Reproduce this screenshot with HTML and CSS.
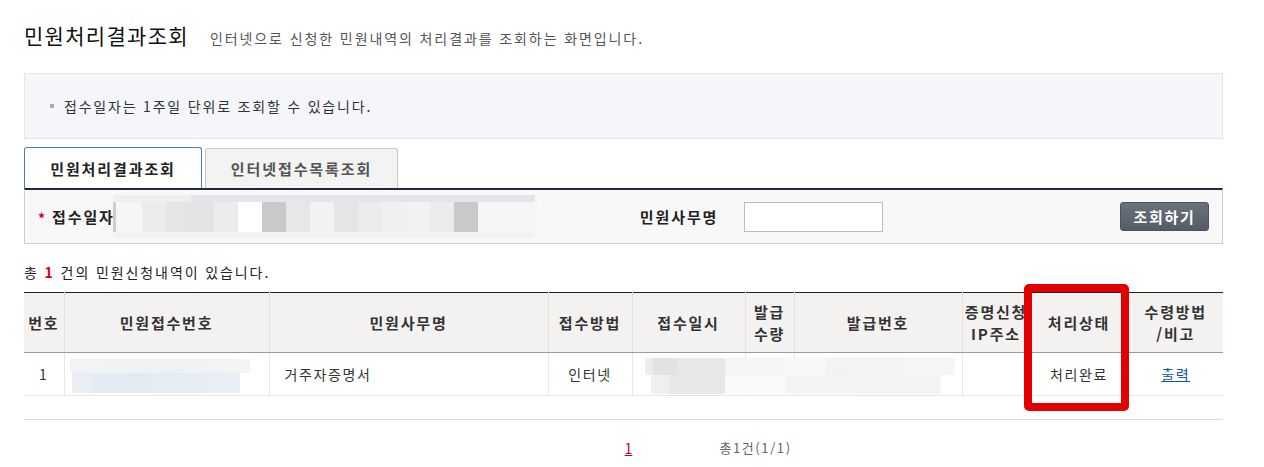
FILE: index.html
```html
<!DOCTYPE html>
<html lang="ko">
<head>
<meta charset="utf-8">
<title>민원처리결과조회</title>
<link rel="stylesheet" href="styles.css">
</head>
<body>
<div class="page">
  <div class="head">
    <h1 class="title">민원처리결과조회</h1>
    <p class="desc">인터넷으로 신청한 민원내역의 처리결과를 조회하는 화면입니다.</p>
  </div>

  <div class="notice"><span class="dot"></span>접수일자는 1주일 단위로 조회할 수 있습니다.</div>

  <div class="tabs">
    <div class="tab active">민원처리결과조회</div>
    <div class="tab">인터넷접수목록조회</div>
  </div>

  <div class="search">
    <span class="req">*</span>
    <span class="lbl">접수일자</span>
    <div class="mask">
      <div class="mask-top"></div>
      <div class="mask-mid"></div>
      <div class="mask-bot"></div>
    </div>
    <span class="lbl lbl2">민원사무명</span>
    <input class="inp" type="text">
    <button class="btn" type="button">조회하기</button>
  </div>

  <p class="count">총 <b>1</b> 건의 민원신청내역이 있습니다.</p>

  <div class="tblwrap">
    <table class="list">
      <colgroup>
        <col class="c1"><col class="c2"><col class="c3"><col class="c4"><col class="c5">
        <col class="c6"><col class="c7"><col class="c8"><col class="c9"><col class="c10">
      </colgroup>
      <thead>
        <tr>
          <th>번호</th>
          <th>민원접수번호</th>
          <th>민원사무명</th>
          <th>접수방법</th>
          <th>접수일시</th>
          <th>발급<br>수량</th>
          <th>발급번호</th>
          <th class="clip">증명신청<br>IP주소</th>
          <th>처리상태</th>
          <th>수령방법<br>/비고</th>
        </tr>
      </thead>
      <tbody>
        <tr>
          <td>1</td>
          <td></td>
          <td class="left">거주자증명서</td>
          <td>인터넷</td>
          <td></td>
          <td></td>
          <td></td>
          <td></td>
          <td>처리완료</td>
          <td><a class="print" href="#">출력</a></td>
        </tr>
      </tbody>
    </table>
    <div class="blur blur-recv">
      <div class="br-top"></div>
      <div class="br-bot"></div>
    </div>
    <div class="blur blur-date">
      <div class="bd-top"></div>
      <div class="bd-bot"></div>
    </div>
    <div class="mark"></div>
  </div>

  <div class="rule"></div>

  <div class="pager">
    <span></span>
    <a class="cur" href="#">1</a>
    <span class="total">총1건(1/1)</span>
  </div>
</div>
</body>
</html>
```

FILE: styles.css
```css
* { box-sizing: border-box; }

body {
  margin: 0;
  font-family: "Noto Sans CJK KR", "Noto Sans", sans-serif;
  color: #333;
  background: #fff;
}

.page {
  width: 1199px;
  margin-left: 24px;
}

/* heading */
.head {
  display: flex;
  align-items: baseline;
  padding-top: 20px;
}
.title {
  margin: 0;
  font-size: 21px;
  font-weight: 400;
  letter-spacing: 1.3px;
  line-height: 30px;
  color: #111;
}
.desc {
  margin: 0 0 0 21px;
  font-size: 14px;
  letter-spacing: 1.9px;
  color: #555;
}

/* notice box */
.notice {
  margin-top: 23px;
  border: 1px solid #e1e5ea;
  background: #f4f6fa;
  padding: 22px 0 22px 25px;
  font-size: 14px;
  line-height: 20px;
  letter-spacing: 1.8px;
  color: #333;
  display: flex;
  align-items: center;
}
.dot {
  width: 4px;
  height: 4px;
  background: #aaa;
  margin-right: 10px;
}

/* tabs */
.tabs {
  display: flex;
  align-items: flex-end;
  gap: 3px;
  margin-top: 8px;
  height: 41px;
}
.tab {
  width: 193px;
  height: 40px;
  display: flex;
  align-items: center;
  justify-content: center;
  border: 1px solid #c8c8c8;
  border-bottom: none;
  border-radius: 3px 3px 0 0;
  background: #f3f3f3;
  font-size: 15px;
  font-weight: 700;
  letter-spacing: 1.9px;
  color: #555;
}
.tab.active {
  width: 178px;
  height: 41px;
  border-color: #4d7cc0;
  background: #fff;
  color: #222;
}

/* search bar */
.search {
  display: flex;
  align-items: center;
  height: 56px;
  border: 1px solid #cccccc;
  border-top: 2px solid #1f2b3b;
  background: #f8f8f8;
  padding: 0 13px 0 13px;
}
.req {
  width: 14px;
  color: #d2001e;
  font-weight: 700;
  font-size: 14px;
  line-height: 14px;
  padding-top: 3px;
}
.lbl {
  font-size: 15px;
  font-weight: 700;
  letter-spacing: 1.9px;
  color: #222;
}
.mask {
  position: relative;
  z-index: 1;
  margin-left: -2px;
  width: 425px;
  display: flex;
  flex-direction: column;
}
.mask-top {
  height: 7px;
  background: linear-gradient(to right, #efefef 0 78px, #e2e5e9 78px 422px, transparent 422px);
}
.mask-mid {
  height: 30px;
  background: linear-gradient(to right,
    #cdcdcd 0 3px, #f6f6f6 3px 29px, #ececec 29px 53px, #e5e5e5 53px 77px,
    #e4e4e4 77px 101px, #ececec 101px 125px, #ffffff 125px 149px, #c9c9c9 149px 173px,
    #e7e7e7 173px 197px, #f2f2f2 197px 221px, #e5e5e5 221px 245px, #ececec 245px 269px,
    #f0f0f0 269px 293px, #f2f2f2 293px 317px, #ebebeb 317px 341px, #c9c9c9 341px 365px,
    #f6f6f6 365px 425px);
}
.mask-bot {
  height: 6px;
  background: linear-gradient(to right, #f2f2f2 0 422px, transparent 422px);
}
.lbl2 {
  margin-left: 102px;
}
.inp {
  margin-left: 26px;
  width: 139px;
  height: 30px;
  border: 1px solid #bcbcbc;
  background: #fff;
}
.btn {
  margin-left: auto;
  width: 89px;
  height: 29px;
  border: 1px solid #4d535c;
  border-radius: 3px;
  background: linear-gradient(#6b727d, #555c67);
  color: #fff;
  font-family: inherit;
  font-size: 15px;
  font-weight: 700;
  letter-spacing: 1.7px;
  padding: 0;
}

/* count */
.count {
  margin: 20px 0 12px;
  font-size: 14px;
  line-height: 16px;
  letter-spacing: 1.9px;
  color: #222;
}
.count b {
  color: #d0021b;
}

/* table */
.tblwrap {
  position: relative;
}
.list {
  width: 1199px;
  table-layout: fixed;
  border-collapse: collapse;
  border-top: 1px solid #222;
}
.c1 { width: 40px; }
.c2 { width: 205px; }
.c3 { width: 279px; }
.c4 { width: 84px; }
.c5 { width: 113px; }
.c6 { width: 49px; }
.c7 { width: 168px; }
.c8 { width: 68px; }
.c9 { width: 98px; }
.c10 { width: 95px; }

.list th {
  height: 60px;
  padding: 0;
  background: #f3f2f0;
  border-left: 1px solid #e4e2df;
  border-bottom: 1px solid #9a9a9a;
  font-size: 15px;
  font-weight: 700;
  letter-spacing: 1.8px;
  line-height: 22px;
  color: #333;
  white-space: nowrap;
  overflow: hidden;
}
.list th:first-child,
.list td:first-child {
  border-left: none;
}
.list th.clip {
  text-overflow: clip;
}
.list td {
  height: 43px;
  padding: 0;
  border-left: 1px solid #e6e6e6;
  border-bottom: 1px solid #e6e6e6;
  text-align: center;
  font-size: 14px;
  letter-spacing: 1.6px;
  color: #333;
}
.list td.left {
  text-align: left;
  padding-left: 15px;
}
.print {
  color: #0b5aa8;
  text-decoration: underline;
}

/* redaction overlays */
.blur {
  position: absolute;
  display: flex;
  flex-direction: column;
}
.blur-recv {
  left: 46px;
  top: 67px;
}
.br-top {
  width: 180px;
  height: 14px;
  background: linear-gradient(to right, #f2f3f5, #eef1f4 60%, #f4f4f4);
}
.br-bot {
  margin-left: 2px;
  width: 168px;
  height: 20px;
  background: linear-gradient(to right, #e9eef4 0 20px, #e4eaf2 20px 80px, #e6ecf3 80px 130px, #e9eef4 130px);
}
.blur-date {
  left: 621px;
  top: 66px;
}
.bd-top {
  width: 310px;
  height: 17px;
  background: linear-gradient(to right,
    #ececec 0 8px, #e1e1e1 8px 32px, #e6e6e6 32px 80px, #f5f5f5 80px 140px,
    #f7f7f7 140px 180px, #f2f2f2 180px 260px, #f5f5f5 260px 310px);
  opacity: 0.95;
}
.bd-bot {
  margin-left: 6px;
  width: 290px;
  height: 19px;
  background: linear-gradient(to right,
    #efefef 0 18px, #e7e7e7 18px 74px, #fafafa 74px 134px, #f4f4f4 134px 200px, #f3f3f3 200px 290px);
  opacity: 0.95;
}

/* annotation */
.mark {
  position: absolute;
  left: 1000px;
  top: -8px;
  width: 105px;
  height: 127px;
  border: 8px solid #e30000;
  border-radius: 5px;
}

/* footer */
.rule {
  margin-top: 23px;
  border-top: 1px solid #dcdcdc;
}
.pager {
  display: grid;
  grid-template-columns: 1fr auto 1fr;
  align-items: center;
  margin-top: 18px;
  line-height: 20px;
}
.cur {
  padding-left: 10px;
  color: #c8001e;
  font-size: 14px;
  text-decoration: underline;
}
.total {
  padding-left: 87px;
  font-size: 13px;
  letter-spacing: 1.6px;
  color: #666;
}
```
